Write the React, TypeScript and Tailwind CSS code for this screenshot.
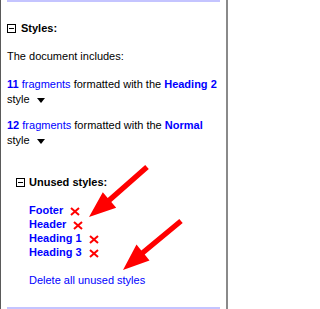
const font = { fontFamily: '"Liberation Sans", Arial, sans-serif' };

const BoxIcon = () => (
    <svg width="9" height="9" viewBox="0 0 9 9" className="shrink-0">
        <rect x="0.5" y="0.5" width="8" height="8" fill="white" stroke="#000" />
        <line x1="2" y1="4.5" x2="7" y2="4.5" stroke="#000" />
    </svg>
);

const DownTriangle = () => (
    <svg width="8" height="5" viewBox="0 0 8 5" className="inline-block ml-[7px] align-middle">
        <polygon points="0,0 8,0 4,5" fill="#000" />
    </svg>
);

const RedX = () => (
    <svg width="10" height="9" viewBox="0 0 10 9" className="inline-block ml-[7px] align-middle">
        <line x1="1" y1="1" x2="9" y2="8" stroke="#f00" strokeWidth="2" />
        <line x1="9" y1="1" x2="1" y2="8" stroke="#f00" strokeWidth="2" />
    </svg>
);

const App: React.FC = () => {
    const unused = ['Footer', 'Header', 'Heading 1', 'Heading 3'];

    return (
        <div
            className="relative w-[228px] h-[309px] bg-white border-l border-r-2 border-l-[#5a5a5a] border-r-[#8a8a8a] text-[11px] text-black overflow-hidden"
            style={font}
        >
            <div className="ml-[6px] w-[213px] h-[2px] bg-[#c4c4ff]" />

            <div className="pl-[6px]">
                <div className="mt-[19px] flex items-center gap-[5px] leading-[14px]">
                    <BoxIcon />
                    <span className="font-bold">Styles:</span>
                </div>

                <p className="mt-[14px] leading-[14px]">The document includes:</p>

                <p className="mt-[14px] leading-[15px]">
                    <span className="text-[#0000ff] font-bold">11</span>{' '}
                    <span className="text-[#0000ff]">fragments</span> formatted with the{' '}
                    <span className="text-[#0000ff] font-bold">Heading 2</span>
                    <br />
                    style
                    <DownTriangle />
                </p>

                <p className="mt-[11px] leading-[15px]">
                    <span className="text-[#0000ff] font-bold">12</span>{' '}
                    <span className="text-[#0000ff]">fragments</span> formatted with the{' '}
                    <span className="text-[#0000ff] font-bold">Normal</span>
                    <br />
                    style
                    <DownTriangle />
                </p>

                <div className="mt-[27px] pl-[9px]">
                    <div className="flex items-center gap-[4px] leading-[14px]">
                        <BoxIcon />
                        <span className="font-bold">Unused styles:</span>
                    </div>

                    <ul className="mt-[14px] pl-[13px] leading-[14px]">
                        {unused.map((name) => (
                            <li key={name} className="text-[#0000ff] font-bold">
                                {name}
                                <RedX />
                            </li>
                        ))}
                    </ul>

                    <div className="mt-[14px] pl-[13px] leading-[14px] text-[#0000ff]">
                        Delete all unused styles
                    </div>
                </div>
            </div>

            <div className="absolute left-[6px] bottom-0 w-[213px] h-[2px] bg-[#c4c4ff]" />

            <svg
                className="absolute left-[-1px] top-0 pointer-events-none"
                width="228"
                height="309"
                viewBox="0 0 228 309"
            >
                <polygon
                    points="145.2,164.9 107.7,197.9 102.8,192.2 89,217 116.2,207.8 111.3,202.1 148.8,169.1"
                    fill="#ff0000"
                />
                <polygon
                    points="179.3,218.9 141.3,250.4 136.5,244.5 123,270 149.5,260.5 144.7,254.6 182.7,223.1"
                    fill="#ff0000"
                />
            </svg>
        </div>
    );
};

export default App;
